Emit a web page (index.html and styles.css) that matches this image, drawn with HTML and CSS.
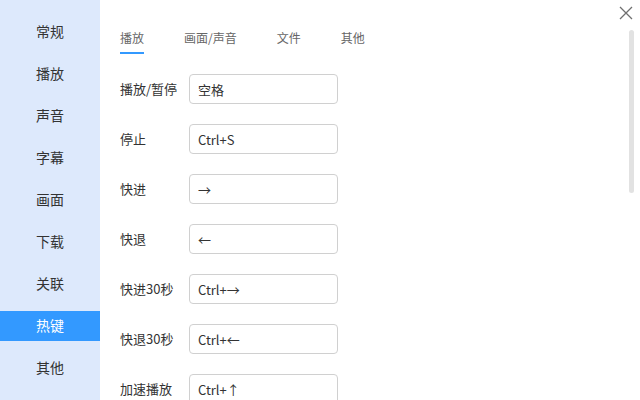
FILE: index.html
```html
<!DOCTYPE html>
<html lang="zh-CN">
  <head>
    <meta charset="UTF-8" />
    <title>设置 - 热键</title>
    <link rel="stylesheet" href="styles.css">
  </head>
  <body>
    <div class="settings">
      <ul class="sidebar">
        <li>常规</li>
        <li>播放</li>
        <li>声音</li>
        <li>字幕</li>
        <li>画面</li>
        <li>下载</li>
        <li>关联</li>
        <li class="active">热键</li>
        <li>其他</li>
      </ul>

      <div class="main">
        <div class="tabs">
          <span class="tab active">播放</span>
          <span class="tab">画面/声音</span>
          <span class="tab">文件</span>
          <span class="tab">其他</span>
        </div>

        <div class="rows">
          <div class="row"><label>播放/暂停</label><input type="text" value="空格" readonly /></div>
          <div class="row"><label>停止</label><input type="text" value="Ctrl+S" readonly /></div>
          <div class="row"><label>快进</label><input type="text" value="→" readonly /></div>
          <div class="row"><label>快退</label><input type="text" value="←" readonly /></div>
          <div class="row"><label>快进30秒</label><input type="text" value="Ctrl+→" readonly /></div>
          <div class="row"><label>快退30秒</label><input type="text" value="Ctrl+←" readonly /></div>
          <div class="row"><label>加速播放</label><input type="text" value="Ctrl+↑" readonly /></div>
        </div>
      </div>

      <!-- close button and scroll thumb sit over the page -->
      <svg class="close" width="14" height="14" viewBox="0 0 14 14">
        <path d="M1 1 L13 13 M13 1 L1 13" stroke="#6f6f6f" stroke-width="1.3" fill="none" />
      </svg>
      <div class="scroll-thumb"></div>
    </div>
  </body>
</html>
```

FILE: styles.css
```css
body {
  margin: 0;
  font-family: "Noto Sans CJK SC", "Noto Sans", sans-serif;
  color: #333;
  background-color: white;
}
.settings {
  position: relative;
  display: flex;
  width: 640px;
  height: 400px;
  overflow: hidden;
}
.sidebar {
  width: 100px;
  flex-shrink: 0;
  margin: 0;
  padding: 17px 0 0;
  list-style: none;
  background-color: #dde9fc;
  display: flex;
  flex-direction: column;
  gap: 12px;
}
.sidebar li {
  height: 30px;
  line-height: 28px;
  text-align: center;
  font-size: 14px;
  color: #333;
}
.sidebar li.active {
  background-color: #3399ff;
  color: white;
}
.main {
  flex: 1;
  padding-left: 20px;
}
.tabs {
  display: flex;
  gap: 40px;
  margin-top: 29px;
}
.tab {
  font-size: 12px;
  line-height: 18px;
  color: #666;
  padding-bottom: 5px;
  border-bottom: 2px solid transparent;
}
.tab.active {
  border-bottom-color: #3399ff;
}
.rows {
  margin-top: 20px;
  display: flex;
  flex-direction: column;
  gap: 20px;
}
.row {
  display: flex;
  align-items: center;
}
.row label {
  width: 69px;
  font-size: 13px;
  line-height: 18px;
  color: #333;
}
.row input {
  width: 149px;
  height: 30px;
  box-sizing: border-box;
  padding: 0 8px;
  border: 1px solid #d0d0d0;
  border-radius: 4px;
  font-family: "Noto Sans CJK SC", "Noto Sans", sans-serif;
  font-size: 13px;
  color: #333;
  outline: none;
}
.close {
  position: absolute;
  top: 6px;
  right: 7px;
}
.scroll-thumb {
  position: absolute;
  top: 30px;
  right: 6px;
  width: 5px;
  height: 163px;
  border-radius: 3px;
  background-color: #e2e2e2;
}
```
